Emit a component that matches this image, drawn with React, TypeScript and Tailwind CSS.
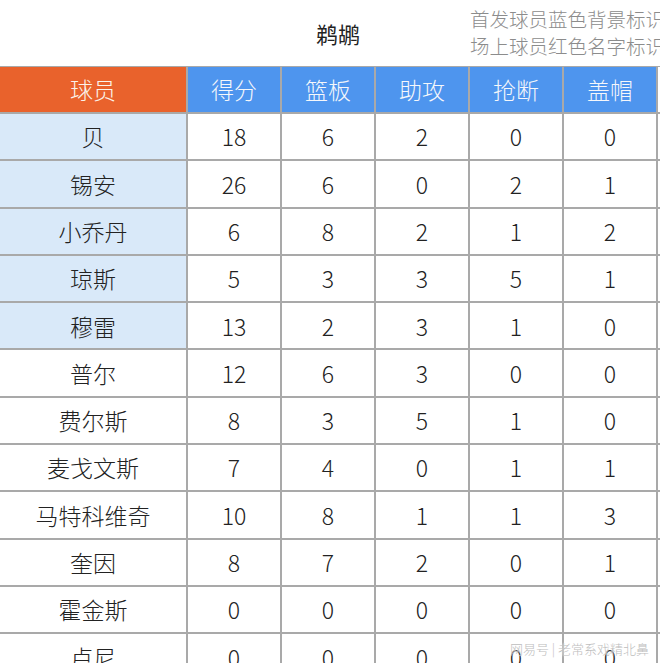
const font = "font-['Noto_Sans_CJK_SC','Noto_Sans',sans-serif]";

const headers = ["得分", "篮板", "助攻", "抢断", "盖帽"];

const rows: { name: string; starter: boolean; stats: number[] }[] = [
  { name: "贝", starter: true, stats: [18, 6, 2, 0, 0] },
  { name: "锡安", starter: true, stats: [26, 6, 0, 2, 1] },
  { name: "小乔丹", starter: true, stats: [6, 8, 2, 1, 2] },
  { name: "琼斯", starter: true, stats: [5, 3, 3, 5, 1] },
  { name: "穆雷", starter: true, stats: [13, 2, 3, 1, 0] },
  { name: "普尔", starter: false, stats: [12, 6, 3, 0, 0] },
  { name: "费尔斯", starter: false, stats: [8, 3, 5, 1, 0] },
  { name: "麦戈文斯", starter: false, stats: [7, 4, 0, 1, 1] },
  { name: "马特科维奇", starter: false, stats: [10, 8, 1, 1, 3] },
  { name: "奎因", starter: false, stats: [8, 7, 2, 0, 1] },
  { name: "霍金斯", starter: false, stats: [0, 0, 0, 0, 0] },
  { name: "卢尼", starter: false, stats: [0, 0, 0, 0, 0] },
];

const App = () => {
  return (
    <div className={`relative h-[663px] w-[660px] overflow-hidden bg-white font-light ${font}`}>
      <div className="relative h-[66px]">
        <p className="absolute left-[316px] top-[18px] text-[22px] font-normal leading-[30px] text-[#222]">
          鹈鹕
        </p>
        <div className="absolute left-[470px] top-[5px] whitespace-nowrap text-[19.5px] leading-[27px] text-[#8c8c8c]">
          <p>首发球员蓝色背景标识</p>
          <p>场上球员红色名字标识</p>
        </div>
      </div>

      <div className="grid grid-cols-[186px_repeat(5,92px)_1fr] gap-[2px] bg-[#a9a9a9] pt-px">
        <div className="flex h-[45px] items-center justify-center bg-[#e9622c] text-[23px] text-[#fbf3ea]">
          球员
        </div>
        {headers.map((h) => (
          <div
            key={h}
            className="flex h-[45px] items-center justify-center bg-[#4e95ee] text-[23px] text-[#f5f7fb]"
          >
            {h}
          </div>
        ))}
        <div className="h-[45px] bg-white" />

        {rows.map((r) => (
          <div key={r.name} className="contents">
            <div
              className={`flex h-[45.3px] items-center justify-center text-[23px] text-[#222] ${
                r.starter ? "bg-[#d9e9f9]" : "bg-white"
              }`}
            >
              {r.name}
            </div>
            {r.stats.map((s, i) => (
              <div
                key={i}
                className="flex h-[45.3px] items-center justify-center bg-white text-[23px] text-[#222]"
              >
                {s}
              </div>
            ))}
            <div className="h-[45.3px] bg-white" />
          </div>
        ))}
      </div>

      <div className="absolute left-[510px] top-[640px] whitespace-nowrap text-[13px] leading-[18px] text-[#bdbdbd] [text-shadow:0_0_2px_#fff]">
        网易号 | 老常系戏精北鼻
      </div>
    </div>
  );
};

export default App;
